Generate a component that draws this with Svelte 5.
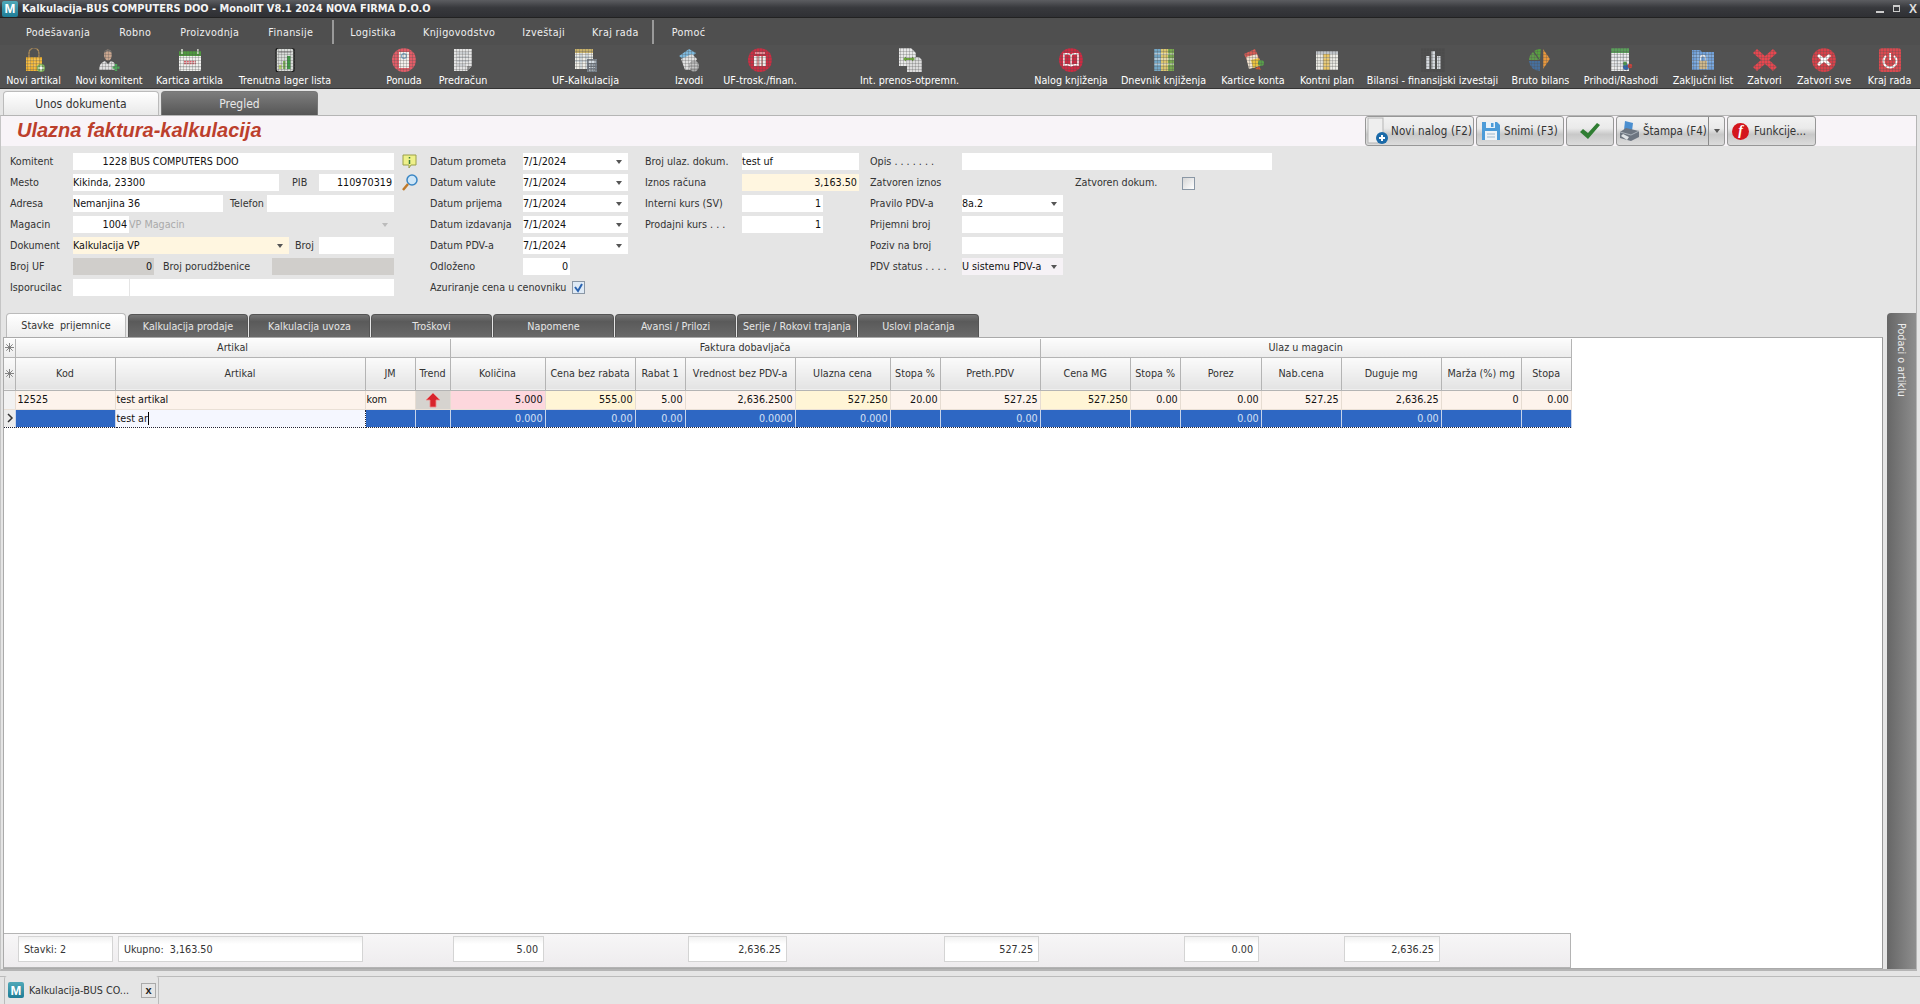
<script>
  const menu1 = ['Podešavanja', 'Robno', 'Proizvodnja', 'Finansije'];
  const menu2 = ['Logistika', 'Knjigovodstvo', 'Izveštaji', 'Kraj rada'];

  const bag = '<path d="M7 9V5a5 5 0 0 1 10 0v4" fill="none" stroke="#b9935a" stroke-width="1.2"/><path d="M4 9h16v14H4z" fill="#eeb02e"/><path d="M4 12h16M4 15h16M4 18h16M8 9v14M12 9v14M16 9v14" stroke="#f7d27a" stroke-width=".7"/><circle cx="19" cy="20" r="4" fill="#7fb85a"/><path d="M19 17.500v5M16.500 20h5" stroke="#fff" stroke-width="1.500"/>';
  const person = '<ellipse cx="11" cy="7" rx="4" ry="5.500" fill="#c9a68f"/><path d="M7.500 5q3.500-4 7 0l.2-2q-3.700-3-7.400 0z" fill="#77736f"/><path d="M2 22q0-7 6-9l3 3 3-3q6 2 6 9z" fill="#e2e2e2"/><path d="M19 16v7M15.500 19.500h7" stroke="#4ea65a" stroke-width="2.500"/>';
  const calendar = '<rect x="1" y="3" width="22" height="20" rx="1.500" fill="#f1f1ee"/><rect x="1" y="3" width="22" height="5" fill="#4f9a3f"/><path d="M4 1v5M20 1v5" stroke="#dfe8d8" stroke-width="1.500"/><path d="M6 13.500h12M6 15.500h12" stroke="#d9606a" stroke-width="1.500" stroke-dasharray="2 .8"/><path d="M1 19h22" stroke="#d0d0d0"/>';
  const ledger = '<rect x="3" y="0" width="18" height="24" rx="2.500" fill="#d9dcd9" stroke="#1c1c1c" stroke-width="1.500"/><path d="M5.500 4h13" stroke="#aaa" stroke-width="2"/><rect x="6" y="17" width="2.500" height="4" fill="#b7cf6a"/><rect x="10" y="13" width="2.500" height="8" fill="#7fb45a"/><rect x="14" y="8" width="3.500" height="13" fill="#3f9a45"/>';
  const offer = '<circle cx="12" cy="12" r="12" fill="#e35d68"/><path d="M7 4h10v16H7z" fill="#f3f0ec"/><circle cx="12" cy="8" r="2.400" fill="none" stroke="#7aa7c9" stroke-width="1.200"/>';
  const page = '<path d="M3 1h18v17l-5 5H3z" fill="#e4e4e4"/><path d="M21 18h-5v5z" fill="#9b9b9b"/><path d="M6 5h12M6 9h12M6 13h12M6 17h8" stroke="#aeb4bb" stroke-width=".9"/>';
  const kalk = '<rect x="1" y="1" width="18" height="20" fill="#f0efe8"/><rect x="1" y="1" width="18" height="4" fill="#c9b26a"/><path d="M1 9h18M1 13h18M7 5v16M13 5v16" stroke="#9fb2c2" stroke-width=".8"/><rect x="13" y="11" width="10" height="13" fill="#77808a"/><rect x="14.500" y="12.500" width="7" height="2.500" fill="#d5dde3"/><path d="M15 17h6M15 19.500h6M15 22h6" stroke="#dfe3e6" stroke-width="1" stroke-dasharray="1.400 1"/>';
  const izvodi = '<path d="M2 8L12 1l7 4-9 9z" fill="#7db8dc"/><path d="M4 11l11-5 5 5-6 11H8z" fill="#e0e0e0"/><ellipse cx="17" cy="18" rx="5" ry="5.500" fill="#aaa"/><path d="M13 16h8M13 19h8" stroke="#eee" stroke-width=".8"/>';
  const trosk = '<circle cx="12" cy="12" r="12" fill="#cb2e43"/><rect x="6" y="8" width="12" height="10" fill="#f2ecec"/><path d="M10 8v10M14 8v10" stroke="#a33" stroke-width="1"/><path d="M7 5h10" stroke="#eeaab0" stroke-width="1.500"/>';
  const prenos = '<path d="M1 0h12l5 5v13H1z" fill="#e8e8e8"/><path d="M9 9h12l3 3v13H9z" fill="#dcdcdc"/><path d="M5 11l3-2.500v1.500h6V8.500L17 11l-3 2.500V12H8v1.500z" fill="#6fa83c"/>';
  const nalog = '<circle cx="12" cy="12" r="12" fill="#cf2a42"/><path d="M12 7q-3-2-7-1v11q4-1 7 1 3-2 7-1V6q-4-1-7 1z" fill="none" stroke="#fff" stroke-width="1.500"/><path d="M12 7v11" stroke="#fff" stroke-width="1.500"/>';
  const dnevnik = '<rect x="2" y="1" width="7" height="22" fill="#74a7c6"/><rect x="9" y="1" width="7" height="22" fill="#dcc66f"/><rect x="16" y="1" width="6" height="22" fill="#79a94f"/><path d="M2 6h20M2 11h20M2 16h20" stroke="#f2f2f2" stroke-width=".9"/>';
  const kartice = '<path d="M3 6l11-5 5 11-11 5z" fill="#d85b55"/><path d="M5 9l11-3 3 12-11 3z" fill="#f1e3cf"/><path d="M10 12l8-2 2 7-8 3z" fill="#e9c23c"/><circle cx="20" cy="15" r="3" fill="#57a04a"/><path d="M14 21l4-3 2 4z" fill="#d4552d"/>';
  const kontni = '<rect x="1" y="3" width="22" height="19" fill="#efeee8"/><rect x="1" y="3" width="22" height="3" fill="#bfc4c9"/><rect x="8" y="6" width="7" height="16" fill="#ecc765"/><path d="M1 10h22M1 14h22M1 18h22M8 6v16M15 6v16" stroke="#c8c8c0" stroke-width=".7"/>';
  const bilansi = '<rect x="0" y="0" width="24" height="24" fill="#4c4c4c"/><rect x="5" y="8" width="3.500" height="13" fill="#d5d9de"/><rect x="10.500" y="3" width="3.500" height="18" fill="#d5d9de"/><rect x="16" y="8" width="3.500" height="13" fill="#d5d9de"/>';
  const bruto = '<path d="M11 12L5 3a11 11 0 0 1 7-2z" fill="#57a03f"/><path d="M10 12H0a11 11 0 0 1 4-8z" fill="#5f9a4a"/><path d="M14 1l7 10-7 10z" fill="#e8973c"/><path d="M11 13H0a11 11 0 0 0 11 10z" fill="#466f9c"/>';
  const prihodi = '<rect x="2" y="0" width="18" height="23" fill="#eeeeee"/><rect x="2" y="0" width="18" height="5" fill="#5aa05a"/><path d="M2 9h18M2 13h18M2 17h18M8 5v18M14 5v18" stroke="#b9c2c9" stroke-width=".7"/><circle cx="17" cy="19" r="3" fill="#2f66b0"/><circle cx="21" cy="18" r="2.300" fill="#c8433c"/><circle cx="16" cy="15.500" r="2" fill="#4d9c4b"/>';
  const zakljucni = '<path d="M1 2h8l2 2h12v18H1z" fill="#6f9fd8"/><path d="M1 8h22M1 13h22M1 18h22M7 4v18M17 4v18" stroke="#a8c7ea" stroke-width=".7"/><rect x="8" y="13" width="8" height="8" fill="#cdb78b"/><path d="M9.500 13v-3a2.500 2.500 0 0 1 5 0v3" fill="none" stroke="#e9e9e9" stroke-width="1.300"/>';
  const zatvori = '<path d="M4 1l8 7 8-7 4 4-8 7 8 7-4 4-8-7-8 7-4-4 8-7-8-7z" fill="#e7464f"/>';
  const zatvoriSve = '<circle cx="12" cy="12" r="12" fill="#d8414a"/><path d="M7 6l5 4 5-4 2 2-4 4 4 4-2 2-5-4-5 4-2-2 4-4-4-4z" fill="#fff"/>';
  const krajRada = '<rect x="1" y="0" width="22" height="24" rx="3" fill="#d94a50"/><path d="M8 8a6.500 6.500 0 1 0 8 0" fill="none" stroke="#fff" stroke-width="2"/><path d="M12 5v7" stroke="#fff" stroke-width="2"/>';

  // width / left gap read off the reference
  const tools = [
    { label: 'Novi artikal', w: 61, ml: 3, icon: bag },
    { label: 'Novi komitent', w: 72, ml: 9, icon: person },
    { label: 'Kartica artikla', w: 73, ml: 8, icon: calendar },
    { label: 'Trenutna lager lista', w: 100, ml: 9, icon: ledger },
    { label: 'Ponuda', w: 44, ml: 47, icon: offer },
    { label: 'Predračun', w: 56, ml: 9, icon: page },
    { label: 'UF-Kalkulacija', w: 73, ml: 58, icon: kalk },
    { label: 'Izvodi', w: 36, ml: 49, icon: izvodi },
    { label: 'UF-trosk./finan.', w: 84, ml: 11, icon: trosk },
    { label: 'Int. prenos-otpremn.', w: 109, ml: 53, icon: prenos },
    { label: 'Nalog knjiženja', w: 80, ml: 67, icon: nalog },
    { label: 'Dnevnik knjiženja', w: 91, ml: 7, icon: dnevnik },
    { label: 'Kartice konta', w: 70, ml: 9, icon: kartice },
    { label: 'Kontni plan', w: 62, ml: 8, icon: kontni },
    { label: 'Bilansi - finansijski izvestaji', w: 135, ml: 7, icon: bilansi },
    { label: 'Bruto bilans', w: 63, ml: 9, icon: bruto },
    { label: 'Prihodi/Rashodi', w: 82, ml: 8, icon: prihodi },
    { label: 'Zaključni list', w: 64, ml: 9, icon: zakljucni },
    { label: 'Zatvori', w: 41, ml: 9, icon: zatvori },
    { label: 'Zatvori sve', w: 62, ml: 8, icon: zatvoriSve },
    { label: 'Kraj rada', w: 51, ml: 9, icon: krajRada }
  ];

  const innerTabs = [
    { label: 'Kalkulacija prodaje', w: 120 },
    { label: 'Kalkulacija uvoza', w: 121 },
    { label: 'Troškovi', w: 121 },
    { label: 'Napomene', w: 121 },
    { label: 'Avansi / Prilozi', w: 121 },
    { label: 'Serije / Rokovi trajanja', w: 120 },
    { label: 'Uslovi plaćanja', w: 121 }
  ];

  const columns = [
    { name: 'Kod', w: 100 },
    { name: 'Artikal', w: 250 },
    { name: 'JM', w: 50 },
    { name: 'Trend', w: 35 },
    { name: 'Količina', w: 95 },
    { name: 'Cena bez rabata', w: 90 },
    { name: 'Rabat 1', w: 50 },
    { name: 'Vrednost bez PDV-a', w: 110 },
    { name: 'Ulazna cena', w: 95 },
    { name: 'Stopa %', w: 50 },
    { name: 'Preth.PDV', w: 100 },
    { name: 'Cena MG', w: 90 },
    { name: 'Stopa %', w: 50 },
    { name: 'Porez', w: 81 },
    { name: 'Nab.cena', w: 80 },
    { name: 'Duguje mg', w: 100 },
    { name: 'Marža (%) mg', w: 80 },
    { name: 'Stopa', w: 50 }
  ];

  const row1 = ['527.250', '20.00', '527.25', '527.250', '0.00', '0.00', '527.25', '2,636.25', '0', '0.00'];
  const row1Cream = [true, false, false, true];
  const row2 = ['0.000', '', '0.00', '', '', '0.00', '', '0.00', '', ''];

  const totals = [
    { text: 'Stavki: 2', w: 95, ml: 14, left: true },
    { text: 'Ukupno:  3,163.50', w: 245, ml: 5, left: true },
    { text: '5.00', w: 91, ml: 90 },
    { text: '2,636.25', w: 99, ml: 144 },
    { text: '527.25', w: 95, ml: 157 },
    { text: '0.00', w: 75, ml: 145 },
    { text: '2,636.25', w: 96, ml: 85 }
  ];

  const dates = ['Datum prometa', 'Datum valute', 'Datum prijema', 'Datum izdavanja', 'Datum PDV-a'];
</script>

{#snippet gridMark()}
  <svg viewBox="0 0 9 9" width="9" height="9">
    <path d="M4.500 0v9M0 4.500h9M1.300 1.300l6.400 6.400M7.700 1.300l-6.400 6.400" stroke="#777" stroke-width=".9"/>
  </svg>
{/snippet}

<div class="app">
  <header class="titlebar">
    <span class="logo">M</span>
    <span class="title-text">Kalkulacija-BUS COMPUTERS DOO - MonolIT V8.1 2024 NOVA FIRMA D.O.O</span>
    <div class="win-btns">
      <span class="win-min"></span>
      <span class="win-max"></span>
      <span class="win-close">X</span>
    </div>
  </header>

  <nav class="menubar">
    {#each menu1 as item}<span class="menu-item">{item}</span>{/each}
    <span class="menu-sep"></span>
    {#each menu2 as item}<span class="menu-item tight">{item}</span>{/each}
    <span class="menu-sep last"></span>
    <span class="menu-item">Pomoć</span>
  </nav>

  <div class="toolbar">
    {#each tools as t}
      <div class="tool" style="width:{t.w}px;margin-left:{t.ml}px">
        <svg viewBox="0 0 24 24" width="24" height="24">{@html t.icon}</svg>
        <span>{t.label}</span>
      </div>
    {/each}
  </div>

  <div class="doc-tabs">
    <div class="doc-tab active">Unos dokumenta</div>
    <div class="doc-tab">Pregled</div>
  </div>

  <main class="doc">
    <div class="doc-head">
      <h1>Ulazna faktura-kalkulacija</h1>
      <div class="actions">
        <button class="act a-new">
          <svg viewBox="0 0 22 28" width="22" height="28">
            <rect x="1" y="1" width="15" height="25" fill="#eee" stroke="#b5b5b5"/>
            <circle cx="15" cy="21" r="6" fill="#1b6aa8"/>
            <path d="M15 18v6M12 21h6" stroke="#fff" stroke-width="2"/>
          </svg>
          <span>Novi nalog (F2)</span>
        </button>
        <button class="act a-save">
          <svg viewBox="0 0 20 20" width="20" height="20">
            <path d="M1 1h15l3 3v15H1z" fill="#4c9bd8"/>
            <rect x="5" y="1" width="9" height="6" fill="#e8f2fa"/>
            <rect x="10" y="2" width="2.500" height="4" fill="#4c9bd8"/>
            <rect x="4" y="10" width="12" height="9" fill="#eef3f7"/>
            <path d="M6 13h8M6 16h8" stroke="#9db7cc"/>
          </svg>
          <span>Snimi (F3)</span>
        </button>
        <button class="act a-ok">
          <svg viewBox="0 0 22 18" width="22" height="18">
            <path d="M1 10l3-3 5 4L18 1l3 2L9 17z" fill="#2f7d32"/>
          </svg>
        </button>
        <div class="act a-print">
          <svg viewBox="0 0 22 22" width="22" height="22">
            <path d="M7 1l8 2-1 8-8-1z" fill="#4b8fd0"/>
            <path d="M2 12l6-4 13 3v6l-8 4-11-3z" fill="#6d7580"/>
            <path d="M2 12l11 3 8-4" fill="none" stroke="#aab2ba"/>
            <path d="M3 16l6 4 2-3-6-3z" fill="#dfe3e6"/>
          </svg>
          <span>Štampa (F4)</span>
          <span class="split"><i class="arrow"></i></span>
        </div>
        <button class="act a-fn">
          <span class="fn-icon">f</span>
          <span>Funkcije...</span>
        </button>
      </div>
    </div>

    <section class="form">
      <div class="col col1">
        <div class="row">
          <span class="lbl l63">Komitent</span>
          <span class="in w56 right">1228</span>
          <span class="in w264 ml1">BUS COMPUTERS DOO</span>
          <svg class="side-ic" viewBox="0 0 16 16" width="16" height="16">
            <path d="M1 1h13v10H9l-2 3v-3H1z" fill="#eef08a" stroke="#9aa04a"/>
            <path d="M7.500 3v1.500M7.500 6v4" stroke="#3a7d3a" stroke-width="1.500"/>
          </svg>
        </div>
        <div class="row">
          <span class="lbl l63">Mesto</span>
          <span class="in w206">Kikinda, 23300</span>
          <span class="lbl l-pib">PIB</span>
          <span class="in w75 right">110970319</span>
          <svg class="side-ic" viewBox="0 0 16 18" width="16" height="18">
            <circle cx="10" cy="6" r="5" fill="#cfe6f7" stroke="#3a86c4" stroke-width="1.500"/>
            <path d="M6 10l-5 6" stroke="#c07a2a" stroke-width="2.500"/>
          </svg>
        </div>
        <div class="row">
          <span class="lbl l63">Adresa</span>
          <span class="in w150">Nemanjina 36</span>
          <span class="lbl l-tel">Telefon</span>
          <span class="in w127"></span>
        </div>
        <div class="row">
          <span class="lbl l63">Magacin</span>
          <span class="in w56 right">1004</span>
          <span class="in-off w265">VP Magacin<i class="arrow pale"></i></span>
        </div>
        <div class="row">
          <span class="lbl l63">Dokument</span>
          <span class="in combo cream w216">Kalkulacija VP<i class="arrow"></i></span>
          <span class="lbl l-broj">Broj</span>
          <span class="in w75"></span>
        </div>
        <div class="row">
          <span class="lbl l63">Broj UF</span>
          <span class="in gray w81 right">0</span>
          <span class="lbl l-por">Broj porudžbenice</span>
          <span class="in gray w122"></span>
        </div>
        <div class="row">
          <span class="lbl l63">Isporucilac</span>
          <span class="in w56"></span>
          <span class="in w264 ml1"></span>
        </div>
      </div>

      <div class="col col2">
        {#each dates as d}
          <div class="row">
            <span class="lbl l93">{d}</span>
            <span class="in combo w105">7/1/2024<i class="arrow"></i></span>
          </div>
        {/each}
        <div class="row">
          <span class="lbl l93">Odloženo</span>
          <span class="in w47 right">0</span>
        </div>
        <div class="row">
          <span class="lbl l-azur">Azuriranje cena u cenovniku</span>
          <span class="check on">
            <svg viewBox="0 0 11 11" width="11" height="11"><path d="M2 5l3 4 4-7" fill="none" stroke="#2a63b0" stroke-width="2"/></svg>
          </span>
        </div>
      </div>

      <div class="col col3">
        <div class="row"><span class="lbl l97">Broj ulaz. dokum.</span><span class="in w117">test uf</span></div>
        <div class="row"><span class="lbl l97">Iznos računa</span><span class="in cream w117 right">3,163.50</span></div>
        <div class="row"><span class="lbl l97">Interni kurs (SV)</span><span class="in w81 right">1</span></div>
        <div class="row"><span class="lbl l97">Prodajni kurs . . .</span><span class="in w81 right">1</span></div>
      </div>

      <div class="col col4">
        <div class="row"><span class="lbl l92">Opis . . . . . . .</span><span class="in w310"></span></div>
        <div class="row">
          <span class="lbl l92">Zatvoren iznos</span>
          <span class="lbl l-zat">Zatvoren dokum.</span>
          <span class="check low"></span>
        </div>
        <div class="row"><span class="lbl l92">Pravilo PDV-a</span><span class="in combo w101">8a.2<i class="arrow"></i></span></div>
        <div class="row"><span class="lbl l92">Prijemni broj</span><span class="in w101"></span></div>
        <div class="row"><span class="lbl l92">Poziv na broj</span><span class="in w101"></span></div>
        <div class="row"><span class="lbl l92">PDV status . . . .</span><span class="in combo pinkish w101">U sistemu PDV-a<i class="arrow"></i></span></div>
      </div>
    </section>

    <div class="lower">
      <div class="lower-main">
        <div class="inner-tabs">
          <div class="itab active">Stavke  prijemnice</div>
          {#each innerTabs as t}
            <div class="itab" style="width:{t.w}px">{t.label}</div>
          {/each}
        </div>

        <div class="grid-panel">
          <table class="grid">
            <colgroup>
              <col style="width:11px" />
              {#each columns as c}<col style="width:{c.w}px" />{/each}
            </colgroup>
            <thead>
              <tr class="band">
                <th class="ind">{@render gridMark()}</th>
                <th colspan="4">Artikal</th>
                <th colspan="7">Faktura dobavljača</th>
                <th colspan="7">Ulaz u magacin</th>
              </tr>
              <tr class="heads">
                <th class="ind">{@render gridMark()}</th>
                {#each columns as c}<th>{c.name}</th>{/each}
              </tr>
            </thead>
            <tbody>
              <tr class="r1">
                <td class="ind"></td>
                <td class="pad">12525</td>
                <td class="txt">test artikal</td>
                <td class="txt">kom</td>
                <td class="trend">
                  <svg viewBox="0 0 16 16" width="16" height="16">
                    <path d="M8 1l7 7h-4v7H5V8H1z" fill="#d8242c" stroke="#f08a8a" stroke-width=".8"/>
                  </svg>
                </td>
                <td class="pink">5.000</td>
                <td class="cream-c">555.00</td>
                <td>5.00</td>
                <td>2,636.2500</td>
                {#each row1 as v, i}
                  <td class:cream-c={row1Cream[i]}>{v}</td>
                {/each}
              </tr>
              <tr class="r2">
                <td class="ind sel"><svg viewBox="0 0 8 10" width="8" height="10"><path d="M2 1l4 4-4 4" fill="none" stroke="#333" stroke-width="1.500"/></svg></td>
                <td></td>
                <td class="edit">test ar<i class="caret"></i></td>
                <td></td>
                <td></td>
                <td>0.000</td>
                <td>0.00</td>
                <td>0.00</td>
                <td>0.0000</td>
                {#each row2 as v}<td>{v}</td>{/each}
              </tr>
            </tbody>
          </table>

          <div class="totals">
            {#each totals as c}
              <span class="total" class:left={c.left} style="width:{c.w}px;margin-left:{c.ml}px">{c.text}</span>
            {/each}
          </div>
        </div>
      </div>
      <aside class="side-tab"><span>Podaci o artiklu</span></aside>
    </div>
  </main>

  <footer class="mdi">
    <div class="mdi-strip">
      <div class="mdi-tab">
        <span class="logo">M</span>
        <span class="mdi-text">Kalkulacija-BUS CO...</span>
        <span class="mdi-close">x</span>
      </div>
    </div>
  </footer>
</div>

<style>
  :global(body) {
    margin: 0;
    background: #e5e5e5;
  }

  .app {
    width: 1920px;
    height: 1004px;
    display: flex;
    flex-direction: column;
    overflow: hidden;
    font-family: "DejaVu Sans Condensed", "Liberation Sans", sans-serif;
    font-size: 10.7px;
    color: #222;
    background: #e5e5e5;
  }

  .logo {
    width: 16px;
    height: 16px;
    flex: none;
    display: flex;
    align-items: center;
    justify-content: center;
    background: linear-gradient(#4fa8b8, #1f7d97);
    border-radius: 2px;
    color: #fff;
    font: bold 13px "Liberation Sans", sans-serif;
  }

  /* window chrome */
  .titlebar {
    height: 18px;
    flex: none;
    display: flex;
    align-items: center;
    padding-left: 2px;
    background: linear-gradient(#5c5d61, #38393d 45%, #2f3034);
    border-bottom: 1px solid #222;
    box-sizing: border-box;
  }

  .title-text {
    margin-left: 4px;
    color: #f4f4f4;
    font: bold 10.9px "DejaVu Sans Condensed", "Liberation Sans", sans-serif;
  }

  .win-btns {
    margin-left: auto;
    display: flex;
    align-items: center;
    gap: 9px;
    padding-right: 3px;
  }

  .win-min {
    width: 8px;
    height: 2px;
    margin-top: 6px;
    background: #ccc;
  }

  .win-max {
    width: 7px;
    height: 7px;
    border: 1px solid #ccc;
    border-top-width: 2px;
    box-sizing: border-box;
  }

  .win-close {
    color: #ddd;
    font: bold 12px "Liberation Sans", sans-serif;
  }

  .menubar {
    height: 27px;
    flex: none;
    display: flex;
    align-items: center;
    padding: 2px 0 0 26px;
    box-sizing: border-box;
    background: #4f4f4f;
    color: #f0f0f0;
    letter-spacing: 0.35px;
  }

  .menu-item {
    margin-right: 29px;
  }

  .menu-item.tight {
    margin-right: 27px;
  }

  .menu-sep {
    width: 2px;
    height: 24px;
    margin: -2px 16px 0 -10px;
    background: #9a9a9a;
  }

  .menu-sep.last {
    margin: -2px 18px 0 -14px;
  }

  .toolbar {
    height: 44px;
    flex: none;
    display: flex;
    background: #525252;
    border-bottom: 1px solid #333;
    box-sizing: border-box;
    color: #fff;
  }

  .tool {
    flex: none;
    display: flex;
    flex-direction: column;
    align-items: center;
    padding-top: 3px;
    white-space: nowrap;
  }

  .tool svg {
    mask-image:
      repeating-linear-gradient(0deg, #000 0 2px, rgba(0, 0, 0, 0.72) 2px 3px),
      repeating-linear-gradient(90deg, #000 0 2px, rgba(0, 0, 0, 0.72) 2px 3px);
    mask-composite: intersect;
  }

  .tool span {
    margin-top: 2px;
    line-height: 13px;
  }

  .doc-tabs {
    height: 26px;
    flex: none;
    display: flex;
    align-items: flex-end;
    gap: 2px;
    padding-left: 3px;
  }

  .doc-tab {
    width: 157px;
    height: 24px;
    box-sizing: border-box;
    display: flex;
    align-items: center;
    justify-content: center;
    border: 1px solid #777;
    border-bottom: none;
    border-radius: 4px 4px 0 0;
    background: linear-gradient(#7d7d7d, #565656);
    color: #e8e8e8;
    font-size: 12px;
  }

  .doc-tab.active {
    width: 156px;
    border-color: #bbb;
    background: linear-gradient(#fff, #e9e9e9);
    color: #333;
  }

  .doc {
    flex: 1;
    min-height: 0;
    display: flex;
    flex-direction: column;
    margin-right: 3px;
    border: 1px solid #b5b5b5;
    border-left-color: #c5c5c5;
    border-bottom-width: 2px;
  }

  .doc-head {
    height: 30px;
    flex: none;
    display: flex;
    align-items: center;
    background: #f8f4f8;
  }

  .doc-head h1 {
    margin: -2px 0 0 16px;
    color: #bc3f2c;
    font: italic bold 20px "Liberation Sans", sans-serif;
  }

  .actions {
    margin-left: auto;
    margin-right: 100px;
    display: flex;
    gap: 2px;
  }

  .act {
    height: 30px;
    box-sizing: border-box;
    padding: 0 0 0 4px;
    display: flex;
    align-items: center;
    gap: 3px;
    border: 1px solid #979797;
    border-radius: 3px;
    background: linear-gradient(#f2f2f2, #eaeaea 40%, #c8c8c8 62%, #dcdcdc);
    font: inherit;
    font-size: 11.5px;
    color: #333;
    white-space: nowrap;
  }

  .a-new { width: 109px; padding-left: 1px; gap: 2px; letter-spacing: 0.15px; }
  .a-save { width: 88px; letter-spacing: 0.1px; }
  .a-ok { width: 48px; justify-content: center; padding: 0; }
  .a-print { width: 109px; padding-left: 1px; gap: 3px; position: relative; }
  .a-fn { width: 89px; gap: 5px; }

  .split {
    position: absolute;
    right: 0;
    top: 0;
    bottom: 0;
    width: 15px;
    border-left: 1px solid #8a8a8a;
    display: flex;
    align-items: center;
    justify-content: center;
  }

  .split .arrow {
    position: static;
  }

  .fn-icon {
    width: 17px;
    height: 17px;
    border-radius: 50%;
    background: #d4161c;
    color: #fff;
    display: flex;
    align-items: center;
    justify-content: center;
    font: italic bold 14px "Liberation Serif", serif;
  }

  /* document form */
  .form {
    height: 167px;
    flex: none;
    display: flex;
    box-sizing: border-box;
    padding: 7px 0 0 9px;
  }

  .col {
    display: flex;
    flex-direction: column;
    gap: 4px;
  }

  .col1 { width: 420px; }
  .col2 { width: 215px; }
  .col3 { width: 225px; }

  .row {
    height: 17px;
    display: flex;
    align-items: center;
    white-space: pre;
  }

  .lbl {
    flex: none;
    color: #333;
  }

  .l63 { width: 63px; }
  .l92 { width: 92px; }
  .l93 { width: 93px; }
  .l97 { width: 97px; }
  .l-pib { width: 27px; padding-left: 13px; }
  .l-tel { width: 37px; padding-left: 7px; }
  .l-broj { width: 24px; padding-left: 6px; }
  .l-por { width: 109px; padding-left: 9px; }
  .l-azur { width: 142px; }
  .l-zat { width: 107px; margin-left: 113px; }

  .in,
  .in-off {
    height: 17px;
    flex: none;
    box-sizing: border-box;
    padding: 0 2px 0 0;
    display: flex;
    align-items: center;
    position: relative;
    background: #fff;
    color: #111;
  }

  .in-off {
    background: none;
    color: #aaa;
  }

  .right { justify-content: flex-end; }
  .cream { background: #fff6e0; }
  .gray { background: #d0cecb; }
  .pinkish { background: #f6f2f6; }
  .ml1 { margin-left: 1px; }

  .w47 { width: 47px; }
  .w56 { width: 56px; }
  .w75 { width: 75px; }
  .w81 { width: 81px; }
  .w101 { width: 101px; }
  .w105 { width: 105px; }
  .w117 { width: 117px; }
  .w122 { width: 122px; }
  .w127 { width: 127px; }
  .w150 { width: 150px; }
  .w206 { width: 206px; }
  .w216 { width: 216px; }
  .w264 { width: 264px; }
  .w265 { width: 265px; }
  .w310 { width: 310px; }

  .arrow {
    position: absolute;
    right: 6px;
    top: 7px;
    width: 0;
    height: 0;
    border: 3px solid transparent;
    border-top: 4px solid #555;
    border-bottom: none;
  }

  .arrow.pale { border-top-color: #bbb; }

  .side-ic {
    margin-left: 8px;
    flex: none;
  }

  .check {
    width: 11px;
    height: 11px;
    flex: none;
    border: 1px solid #8a97a5;
    background: linear-gradient(135deg, #d6d6d6, #fff);
    display: block;
  }

  .check.low { margin-top: 2px; }
  .check svg { display: block; }
  .check.on { background: #dfeaf5; }

  /* lower part */
  .lower {
    flex: 1;
    min-height: 0;
    display: flex;
  }

  .lower-main {
    width: 1881px;
    display: flex;
    flex-direction: column;
    margin-left: 2px;
  }

  .inner-tabs {
    height: 24px;
    flex: none;
    display: flex;
    align-items: flex-end;
    gap: 1px;
    padding-left: 3px;
  }

  .itab {
    height: 23px;
    flex: none;
    box-sizing: border-box;
    display: flex;
    align-items: center;
    justify-content: center;
    border: 1px solid #555;
    border-bottom: none;
    border-radius: 4px 4px 0 0;
    background: linear-gradient(#757575, #5a5a5a 30%, #6a6a6a);
    color: #e6e6e6;
    white-space: pre;
  }

  .itab.active {
    width: 120px;
    height: 24px;
    border-color: #bbb;
    background: linear-gradient(#fff, #eee);
    color: #333;
    margin-right: 1px;
  }

  .grid-panel {
    flex: 1;
    min-height: 0;
    display: flex;
    flex-direction: column;
    background: #fff;
    border: 1px solid #aaa;
    border-right-color: #999;
    padding-top: 1px;
  }

  .grid {
    width: 1567px;
    table-layout: fixed;
    border-collapse: collapse;
    white-space: nowrap;
  }

  .grid th {
    padding: 0;
    font-weight: normal;
    color: #333;
    border: 1px solid #b4b4b4;
    border-top: none;
    border-left: none;
    overflow: hidden;
  }

  .band th {
    height: 18px;
    background: linear-gradient(#fcfcfc, #ececec);
    box-sizing: border-box;
  }

  .heads th {
    height: 33px;
    background: linear-gradient(#fbfbfb, #e3e3e3);
    box-sizing: border-box;
  }

  .grid th.ind svg {
    display: block;
    margin: 0 auto;
  }

  .grid td {
    height: 18px;
    padding: 0 2px 0 1px;
    box-sizing: border-box;
    text-align: right;
    overflow: hidden;
  }

  .r1 td {
    height: 19px;
    background: #fdf3ec;
    border-right: 1px solid #e6dcd2;
    border-bottom: 1px solid #eae0d6;
    color: #111;
  }

  .r1 td.txt { text-align: left; }
  .r1 td.pad { text-align: left; padding-left: 2px; }
  .r1 td.ind { background: #f2f2f2; }
  .r1 td.pink { background: #fdd7dd; }
  .r1 td.cream-c { background: #fff5d6; }

  .r1 td.trend {
    background: #d6d3cf;
    text-align: center;
    padding: 0;
  }

  .trend svg {
    display: block;
    margin: 0 auto;
  }

  .r2 td {
    background: #2e67c3;
    border-right: 1px solid #c8d4ea;
    border-top: 1px dotted #223;
    border-bottom: 1px dotted #223;
    color: #d5e0f5;
  }

  .r2 td.ind {
    background: #ececec;
    padding: 0 0 0 2px;
    text-align: left;
  }

  .ind svg { display: block; }

  .r2 td.edit {
    background: #f5f7ff;
    color: #111;
    text-align: left;
    padding-left: 1px;
    border: 1px dotted #223;
  }

  .caret {
    display: inline-block;
    width: 1px;
    height: 13px;
    background: #000;
    vertical-align: -3px;
  }

  .totals {
    height: 35px;
    flex: none;
    width: 1567px;
    margin-top: auto;
    padding-bottom: 3px;
    display: flex;
    align-items: center;
    box-sizing: border-box;
    border-top: 1px solid #b4b4b4;
    border-right: 1px solid #b4b4b4;
    border-bottom: 1px solid #b4b4b4;
    background: linear-gradient(#f7f6f7, #eeecee);
  }

  .total {
    height: 26px;
    flex: none;
    box-sizing: border-box;
    padding: 0 5px;
    display: flex;
    align-items: center;
    justify-content: flex-end;
    border: 1px solid #d4d4d4;
    background: linear-gradient(#f1f1f1, #fff 30%, #fff);
    color: #333;
    white-space: pre;
  }

  .total.left { justify-content: flex-start; }

  .side-tab {
    width: 29px;
    flex: none;
    margin-left: 4px;
    border-radius: 4px 0 0 0;
    background: linear-gradient(90deg, #666, #8e8e8e);
    color: #eee;
    display: flex;
    justify-content: center;
  }

  .side-tab span {
    writing-mode: vertical-rl;
    padding-top: 10px;
  }

  /* open window strip */
  .mdi {
    height: 33px;
    flex: none;
    box-sizing: border-box;
    padding-top: 5px;
    background: #e5e5e5;
  }

  .mdi-strip {
    height: 28px;
    box-sizing: border-box;
    padding-left: 4px;
    border-top: 1px solid #bbb;
  }

  .mdi-tab {
    width: 155px;
    height: 28px;
    margin-top: -1px;
    box-sizing: border-box;
    display: flex;
    align-items: center;
    padding: 0 2px 0 3px;
    background: #e5e5e5;
    border: 1px solid #bbb;
    border-top: none;
    border-bottom: none;
    border-radius: 3px 3px 0 0;
  }

  .mdi-text {
    margin-left: 5px;
    color: #333;
  }

  .mdi-close {
    margin-left: auto;
    width: 13px;
    height: 13px;
    display: flex;
    align-items: center;
    justify-content: center;
    border: 1px solid #aaa;
    font: bold 11px "Liberation Sans", sans-serif;
    color: #222;
  }
</style>
